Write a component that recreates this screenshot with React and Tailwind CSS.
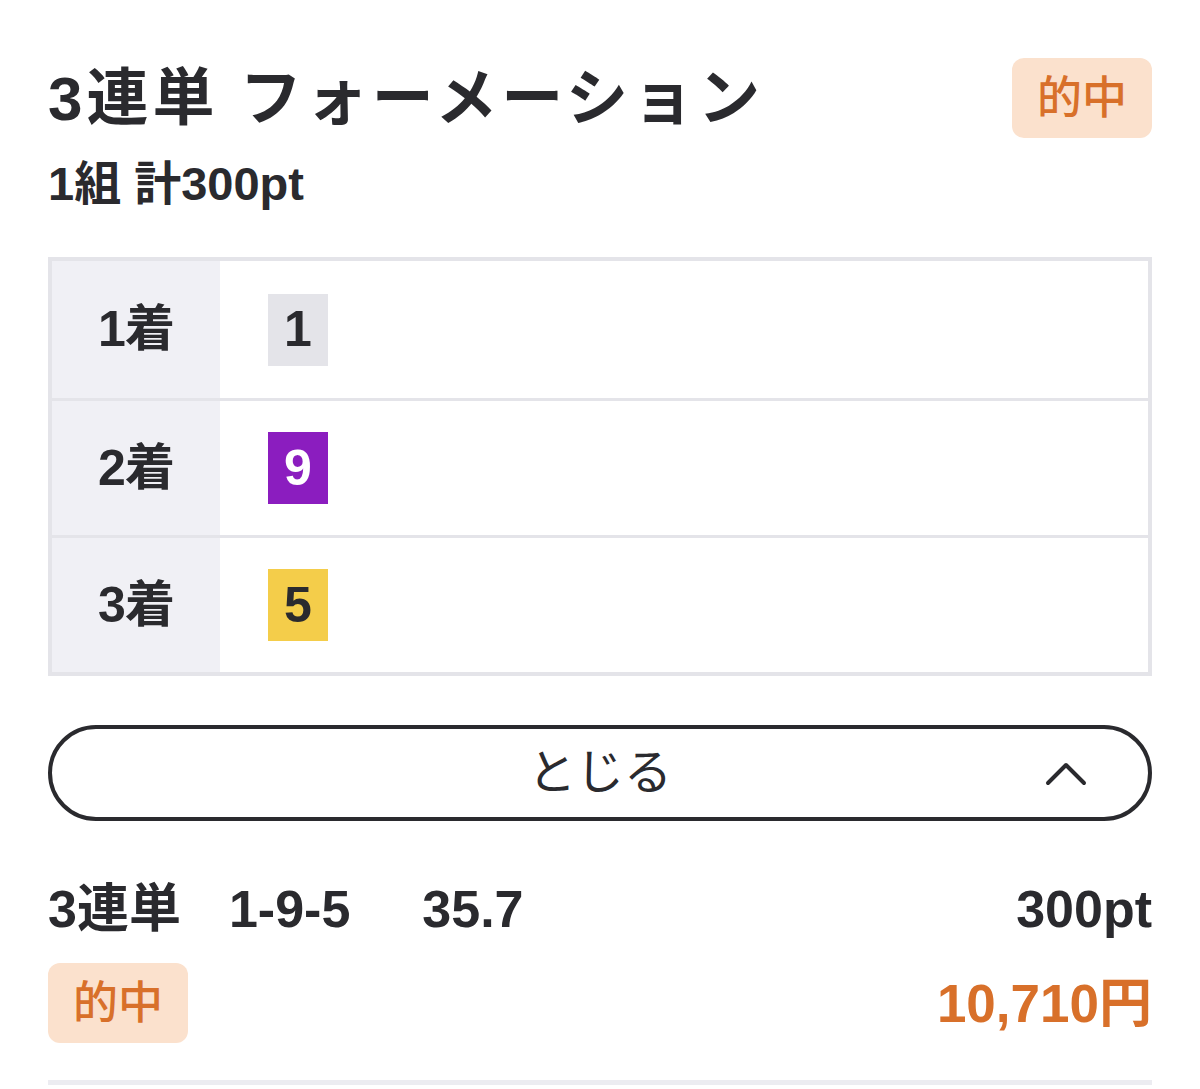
import React from "react";

const font = { fontFamily: '"Liberation Sans", "Noto Sans CJK JP", "Noto Sans", sans-serif' };

const rows = [
  { label: "1着", num: "1", box: "bg-[#e4e4e9] text-[#2a2a2e]" },
  { label: "2着", num: "9", box: "bg-[#8b1dbf] text-white" },
  { label: "3着", num: "5", box: "bg-[#f4cd4a] text-[#2a2a2e]" },
];

function Badge() {
  return (
    <div className="w-[140px] h-[80px] rounded-[12px] bg-[#fbe1cd] flex items-center justify-center text-[45px] font-medium text-[#d8702a] leading-none">
      的中
    </div>
  );
}

export default function App() {
  return (
    <div className="min-h-screen bg-white px-[48px] text-[#2a2a2e]" style={font}>
      <div className="flex justify-between items-start pt-[58px]">
        <div>
          <h1 className="text-[62px] font-bold leading-none mt-[10px] tracking-[4px]">
            3連単 フォーメーション
          </h1>
          <p className="text-[47px] font-bold leading-none mt-[30px]">1組 計300pt</p>
        </div>
        <Badge />
      </div>

      <div className="mt-[50px] border-[4px] border-[#e4e4e9]">
        {rows.map((r, i) => (
          <div
            key={r.label}
            className={`flex h-[137px] ${i > 0 ? "border-t-[3px] border-[#e4e4e9]" : ""}`}
          >
            <div className="w-[168px] bg-[#f0f0f5] flex items-center justify-center text-[50px] font-bold tracking-[-1px]">
              {r.label}
            </div>
            <div className="flex-1 flex items-center pl-[48px]">
              <div className={`w-[60px] h-[72px] flex items-center justify-center text-[50px] font-bold ${r.box}`}>
                {r.num}
              </div>
            </div>
          </div>
        ))}
      </div>

      <button className="mt-[49px] w-full h-[96px] rounded-full border-[4px] border-[#2a2a2e] relative flex items-center justify-center bg-white">
        <span className="text-[48px] leading-none">とじる</span>
        <svg
          className="absolute right-[60px] top-1/2 -translate-y-1/2"
          width="44"
          height="28"
          viewBox="0 0 44 28"
          fill="none"
        >
          <path d="M4 24 L22 6 L40 24" stroke="#2a2a2e" strokeWidth="4" strokeLinecap="round" strokeLinejoin="round" />
        </svg>
      </button>

      <div className="mt-[62px] flex justify-between items-center text-[52px] font-bold leading-none">
        <div className="flex">
          <span>3連単</span>
          <span className="ml-[48px]">1-9-5</span>
          <span className="ml-[72px]">35.7</span>
        </div>
        <span>300pt</span>
      </div>

      <div className="mt-[28px] flex justify-between items-center">
        <Badge />
        <span className="text-[53px] font-bold text-[#d8702a] leading-none">10,710円</span>
      </div>

      <div className="mt-[37px] h-[5px] bg-[#ececf1]" />
    </div>
  );
}
